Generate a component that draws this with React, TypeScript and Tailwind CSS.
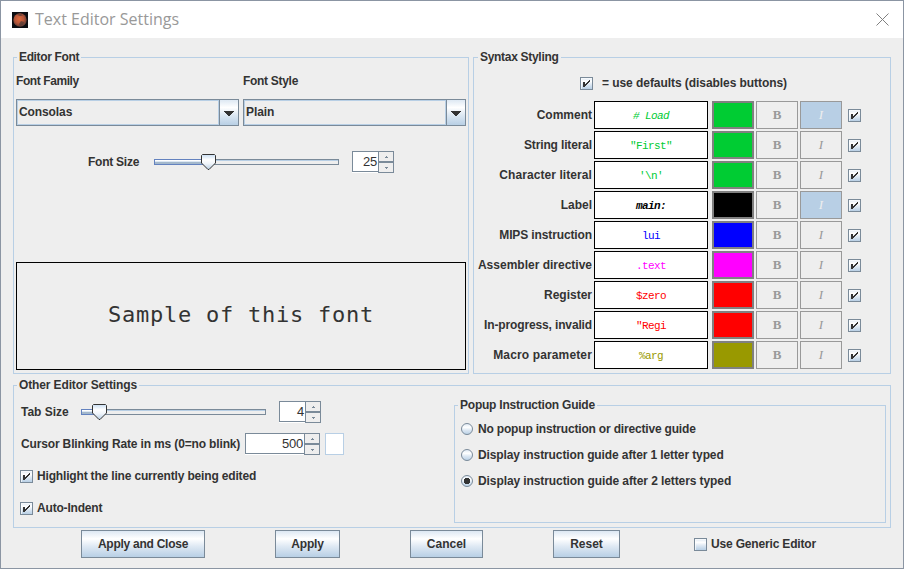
import React from "react";

type Kids = { children?: React.ReactNode };

const OCEAN = "bg-[linear-gradient(to_bottom,#dde8f3_0%,#ffffff_30%,#dde8f3_60%,#b8cfe5_100%)]";

function Panel({ title, box, tracking, children }: Kids & { title: string; box: string; tracking: string }) {
  return (
    <section className={`flex flex-col border border-[#b8cfe5] ${box}`}>
      <h2 className={`-mt-[9px] ml-[3px] h-4 w-fit bg-[#eeeeee] px-[2px] leading-4 ${tracking}`}>{title}</h2>
      {children}
    </section>
  );
}

function Check({ checked = true }: { checked?: boolean }) {
  return (
    <span className={`block h-[13px] w-[13px] shrink-0 border border-[#7a8a99] shadow-[inset_1px_1px_0_#ffffffaa] ${OCEAN}`}>
      {checked && (
        <svg viewBox="0 0 11 11" className="block h-[11px] w-[11px]" shapeRendering="crispEdges" fill="#333333">
          <path d="M2 4h2v5h-2zM4 6h1v2h-1zM5 5h1v2h-1zM6 4h1v2h-1zM7 3h1v2h-1zM8 2h1v2h-1z" />
        </svg>
      )}
    </span>
  );
}

function Radio({ on = false }: { on?: boolean }) {
  return (
    <svg viewBox="0 0 12 12" className="h-3 w-3 shrink-0">
      <defs>
        <linearGradient id="radioFill" x1="0" y1="0" x2="0" y2="1">
          <stop offset="0" stopColor="#dde8f3" />
          <stop offset=".35" stopColor="#fff" />
          <stop offset=".6" stopColor="#dde8f3" />
          <stop offset="1" stopColor="#b8cfe5" />
        </linearGradient>
      </defs>
      <circle cx="6" cy="6" r="5.5" fill="url(#radioFill)" stroke="#7a8a99" />
      {on && <path d="M4 3h4v1h1v4h-1v1h-4v-1h-1v-4h1z" fill="#333" shapeRendering="crispEdges" />}
    </svg>
  );
}

function Combo({ value }: { value: string }) {
  return (
    <div className="flex h-[27px] w-[223px] border border-[#7a8a99]">
      <div className="flex flex-1 items-center border border-[#b8cfe5] pl-[1px] pb-[1px] tracking-[-0.1px]">{value}</div>
      <div className={`flex w-[19px] items-center justify-center border-l border-[#7a8a99] ${OCEAN}`}>
        <svg viewBox="0 0 10 5" className="mt-px h-[5px] w-[10px]" shapeRendering="crispEdges">
          <path d="M0 0h10v1h-1v1h-1v1h-1v1h-1v1h-2v-1h-1v-1h-1v-1h-1v-1h-1z" fill="#333" />
        </svg>
      </div>
    </div>
  );
}

function Slider({ at }: { at: number }) {
  return (
    <svg viewBox="0 0 185 16" className="h-4 w-[185px] shrink-0">
      <defs>
        <linearGradient id="thumb" x1="0" y1="0" x2="0" y2="1">
          <stop offset="0" stopColor="#c8ddf2" />
          <stop offset=".35" stopColor="#fff" />
          <stop offset=".6" stopColor="#f0f5fa" />
          <stop offset="1" stopColor="#b8cfe5" />
        </linearGradient>
      </defs>
      <rect x=".5" y="5.5" width="184" height="5" fill="#eeeeee" stroke="#7a8a99" />
      <path d="M1 6.5h183" stroke="#b8cfe5" />
      <rect x=".5" y="5.5" width={at + 5} height="5" fill="#ffffff" stroke="#6382bf" />
      <rect x="1" y="7" width={at + 4} height="1" fill="#dde8f3" />
      <rect x="1" y="8" width={at + 4} height="2" fill="#a3b8cc" />
      <path transform={`translate(${at} 0)`} d="M1.5 .5h12l1 1v7.5l-6.5 6.5h-1l-6.5-6.5v-7.5z" fill="url(#thumb)" stroke="#333333" strokeWidth="1" />
    </svg>
  );
}

function Spinner({ value, box }: { value: string; box: string }) {
  return (
    <div className={`flex h-[22px] ${box}`}>
      <div className="flex flex-1 border-b border-white">
        <div className="flex flex-1 items-center justify-end border border-r-0 border-[#7a8a99] bg-white pr-px text-[13px] font-normal tracking-[-0.2px]">
          {value}
        </div>
      </div>
      <div className="flex w-4 flex-col">
        <div className="flex h-[11px] items-center justify-center border border-[#7a8a99]">
          <svg viewBox="0 0 3 2" className="h-[2px] w-[3px]" shapeRendering="crispEdges">
            <path d="M1 0h1v1h1v1h-3v-1h1z" fill="#7a8a99" />
          </svg>
        </div>
        <div className="flex h-[11px] items-center justify-center border border-[#7a8a99]">
          <svg viewBox="0 0 3 2" className="h-[2px] w-[3px]" shapeRendering="crispEdges">
            <path d="M0 0h3v1h-1v1h-1v-1h-1z" fill="#7a8a99" />
          </svg>
        </div>
      </div>
    </div>
  );
}

function Button({ label, box }: { label: string; box: string }) {
  return (
    <button className={`flex h-7 items-center justify-center border border-[#7a8a99] pb-px font-bold ${OCEAN} ${box}`}>
      {label}
    </button>
  );
}

const ROWS = [
  { name: "Comment", sample: "# Load", text: "text-[#00cc33]", fill: "bg-[#00cc33]", italic: true, tracking: "" },
  { name: "String literal", sample: "\"First\"", text: "text-[#00cc33]", fill: "bg-[#00cc33]", tracking: "tracking-[-0.14px]" },
  { name: "Character literal", sample: "'\\n'", text: "text-[#00cc33]", fill: "bg-[#00cc33]", tracking: "tracking-[0.08px]" },
  { name: "Label", sample: "main:", text: "text-black font-bold", fill: "bg-black", italic: true, tracking: "" },
  { name: "MIPS instruction", sample: "lui", text: "text-[#0000ff]", fill: "bg-[#0000ff]", tracking: "tracking-[-0.12px]" },
  { name: "Assembler directive", sample: ".text", text: "text-[#ff00ff]", fill: "bg-[#ff00ff]", tracking: "" },
  { name: "Register", sample: "$zero", text: "text-[#ff0000]", fill: "bg-[#ff0000]", tracking: "" },
  { name: "In-progress, invalid", sample: "\"Regi", text: "text-[#ff0000]", fill: "bg-[#ff0000]", tracking: "tracking-[-0.14px]" },
  { name: "Macro parameter", sample: "%arg", text: "text-[#999900]", fill: "bg-[#999900]", tracking: "tracking-[0.14px]" },
];

function StyleRow({ row }: { row: (typeof ROWS)[number] }) {
  const toggle = "flex h-7 w-[42px] items-center justify-center border border-[#999999] font-['Liberation_Serif',serif] text-[13px]";
  return (
    <div className="flex h-7 items-center">
      <span className={`w-[118px] whitespace-nowrap text-right ${row.tracking}`}>{row.name}</span>
      <div
        className={`ml-[2px] flex h-7 w-[114px] items-center justify-center border border-black bg-white pt-[2px] font-['Liberation_Mono',monospace] text-[11px] tracking-[-0.6px] whitespace-pre ${row.text} ${row.italic ? "italic" : ""} ${row.name === "Label" ? "" : "font-normal"}`}
      >
        {row.sample}
      </div>
      <div className={`ml-1 h-7 w-[42px] border-2 border-[#808080] ${row.fill}`} />
      <div className={`ml-[2px] ${toggle} text-[#999999]`}>B</div>
      <div className={`ml-[2px] ${toggle} font-normal italic ${row.italic ? "bg-[#b8cfe5] text-[#eeeeee]" : "text-[#999999]"}`}>I</div>
      <div className="ml-[6px] mt-px">
        <Check />
      </div>
    </div>
  );
}

function TitleBar() {
  return (
    <header className="flex h-[37px] items-center bg-white pl-[11px] pr-[14px]">
      <svg viewBox="0 0 16 16" className="h-4 w-4">
        <defs>
          <radialGradient id="mars" cx=".45" cy=".42" r=".6">
            <stop offset="0" stopColor="#e06a3c" />
            <stop offset=".55" stopColor="#b8573a" />
            <stop offset="1" stopColor="#5a3a34" />
          </radialGradient>
        </defs>
        <rect width="16" height="16" fill="#0b0d12" />
        <circle cx="8" cy="8" r="6.7" fill="url(#mars)" />
        <path d="M7 12l2-3 3 1-1 3-3 1zM4 2.500l5-.5 2 1.500-3 .5z" fill="#4c3a38" opacity=".7" />
      </svg>
      <h1 className="-mt-px ml-[7px] flex-1 font-['Open_Sans','Noto_Sans',sans-serif] text-[16px] font-normal text-[#999999]">Text Editor Settings</h1>
      <svg viewBox="0 0 13 13" className="-mt-px h-[13px] w-[13px]">
        <path d="M.5 .5l12 12M12.500 .5l-12 12" stroke="#808080" />
      </svg>
    </header>
  );
}

export default function App() {
  return (
    <main className="flex h-[569px] w-[904px] flex-col overflow-hidden border border-[#8b95a3] bg-[#eeeeee] font-['Liberation_Sans',Arial,sans-serif] text-[12px] font-bold leading-4 text-[#333333]">
      <TitleBar />

      <div className="mt-[19px] ml-3 flex gap-1">
        <Panel title="Editor Font" tracking="tracking-[-0.36px]" box="h-[317px] w-[456px]">
          <div className="ml-[2px] mt-2 flex gap-1">
            <div className="w-[223px]">
              <p className="tracking-[-0.42px]">Font Family</p>
              <div className="mt-[10px]"><Combo value="Consolas" /></div>
            </div>
            <div className="w-[223px]">
              <p className="tracking-[-0.3px]">Font Style</p>
              <div className="mt-[10px]"><Combo value="Plain" /></div>
            </div>
          </div>
          <div className="ml-[74px] mt-[25px] flex h-[22px] items-center">
            <span className="w-[66px] tracking-[-0.25px]">Font Size</span>
            <Slider at={47} />
            <Spinner value="25" box="ml-[13px] w-[42px]" />
          </div>
          <div className="ml-[2px] mt-[89px] flex h-[108px] w-[450px] items-center justify-center border border-black pb-[3px] font-['DejaVu_Sans_Mono',monospace] text-[22px] font-normal tracking-[0.75px]">
            Sample of this font
          </div>
        </Panel>

        <Panel title="Syntax Styling" tracking="ml-[4px] tracking-[-0.3px]" box="h-[317px] w-[418px]">
          <div className="ml-[106px] mt-[10px] flex h-4 items-center gap-[9px]">
            <Check />
            <span className="tracking-[-0.06px]">= use defaults (disables buttons)</span>
          </div>
          <div className="mt-[10px] flex flex-col gap-[2px]">
            {ROWS.map((row) => (
              <StyleRow key={row.name} row={row} />
            ))}
          </div>
        </Panel>
      </div>

      <div className="ml-3 mt-[11px] flex">
        <Panel title="Other Editor Settings" tracking="tracking-[-0.13px]" box="h-[143px] w-[878px]">
          <div className="flex">
            <div className="ml-[6px] w-[434px] pt-2">
              <div className="ml-px flex h-[22px] items-center">
                <span className="w-[60px]">Tab Size</span>
                <Slider at={11} />
                <Spinner value="4" box="ml-[13px] w-[42px]" />
              </div>
              <div className="ml-px mt-[10px] flex h-[22px] items-center">
                <span className="w-[224px] whitespace-nowrap tracking-[-0.15px]">Cursor Blinking Rate in ms (0=no blink)</span>
                <Spinner value="500" box="w-[75px]" />
                <div className="ml-[5px] h-[22px] w-[19px] border border-[#b8cfe5] bg-white" />
              </div>
              <div className="mt-[13px] flex h-4 items-center gap-1">
                <Check />
                <span className="tracking-[-0.17px]">Highlight the line currently being edited</span>
              </div>
              <div className="mt-4 flex h-4 items-center gap-1">
                <Check />
                <span className="tracking-[-0.18px]">Auto-Indent</span>
              </div>
            </div>
            <div className="pt-3">
              <Panel title="Popup Instruction Guide" tracking="tracking-[-0.22px]" box="h-[118px] w-[432px]">
                <div className="ml-[6px] mt-2 flex flex-col gap-[10px]">
                  <label className="flex items-center gap-[5px] tracking-[-0.18px]"><Radio />No popup instruction or directive guide</label>
                  <label className="flex items-center gap-[5px] tracking-[-0.11px]"><Radio />Display instruction guide after 1 letter typed</label>
                  <label className="flex items-center gap-[5px] tracking-[-0.09px]"><Radio on />Display instruction guide after 2 letters typed</label>
                </div>
              </Panel>
            </div>
          </div>
        </Panel>
      </div>

      <footer className="ml-[80px] mt-[2px] flex h-7 items-center">
        <Button label="Apply and Close" box="w-[124px] tracking-[-0.26px]" />
        <Button label="Apply" box="ml-[70px] w-[65px] tracking-[-0.2px]" />
        <Button label="Cancel" box="ml-[70px] w-[73px]" />
        <Button label="Reset" box="ml-[70px] w-[67px]" />
        <div className="ml-[74px] flex items-center gap-1">
          <div className="mt-px"><Check checked={false} /></div>
          <span className="tracking-[-0.17px]">Use Generic Editor</span>
        </div>
      </footer>
    </main>
  );
}
